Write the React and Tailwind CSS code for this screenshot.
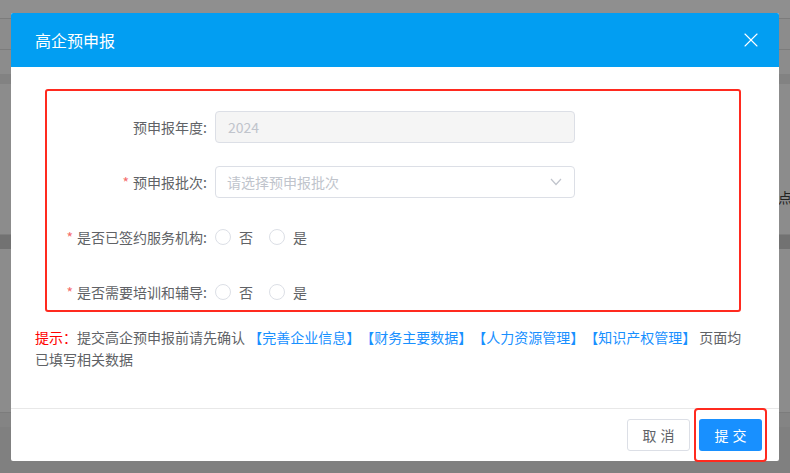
import { X } from 'lucide-react';

const Label = ({ required, children }) => (
  <div className="w-[160px] shrink-0 text-right text-[14px] text-[#606266]">
    {required && <span className="mr-[4px] text-[#f56c6c]">*</span>}
    {children}:
  </div>
);

const Radio = ({ label }) => (
  <label className="flex items-center mr-[16px]">
    <span className="h-[16px] w-[16px] rounded-full border border-[#dcdfe6] bg-white" />
    <span className="ml-[8px] text-[14px] text-[#606266]">{label}</span>
  </label>
);

const Link = ({ children }) => <span className="text-[#1890ff]">【{children}】</span>;

export default function App() {
  return (
    <div
      className="relative h-[473px] w-[790px] overflow-hidden bg-[#8c8c8c]"
      style={{ fontFamily: '"Noto Sans CJK SC", "Noto Sans", sans-serif' }}
    >
      {/* page behind the overlay */}
      <div className="flex flex-col">
        <div className="h-[19px] border-b border-[#7c7c7c] bg-[#8f8f8f]" />
        <div className="h-[31px] border-b border-[#7c7c7c]" />
        <div className="h-[24px]" />
        <div className="h-[10px] bg-[#828282]" />
        <div className="h-[105px]" />
        <div className="h-[16px] text-[14px] leading-[16px] text-[#222]">
          <span className="ml-[778px] whitespace-nowrap">点击</span>
        </div>
        <div className="h-[30px] border-b border-[#7e7e7e]" />
        <div className="h-[14px] bg-[#727272]" />
        <div className="h-[164px] border-b border-[#7c7c7c]" />
        <div className="h-[14px] bg-[#848484]" />
        <div className="h-[50px] bg-[#808080]" />
      </div>

      <div className="absolute left-[11px] top-[13px] flex h-[448px] w-[768px] flex-col rounded-[2px] bg-white">
        <div className="flex h-[54px] items-center justify-between rounded-t-[2px] bg-[#029ef2] pl-[24px] pr-[16px] text-white">
          <span className="text-[16px]">高企预申报</span>
          <X size={24} strokeWidth={1.1} />
        </div>

        <div className="flex-1 px-[24px] pt-[22px]">
          <div className="ml-[10px] h-[223px] w-[696px] rounded-[3px] border-2 border-[#ff2a1f] pt-[20px]">
            <div className="mb-[23px] flex h-[32px] items-center">
              <Label>预申报年度</Label>
              <div className="ml-[8px] flex h-[32px] w-[360px] items-center rounded-[4px] border border-[#dcdfe6] bg-[#f5f5f5] px-[12px] text-[14px] text-[#c0c4cc]">
                2024
              </div>
            </div>
            <div className="mb-[23px] flex h-[32px] items-center">
              <Label required>预申报批次</Label>
              <div className="ml-[8px] flex h-[32px] w-[360px] items-center justify-between rounded-[4px] border border-[#dcdfe6] bg-white pl-[11px] pr-[12px] text-[14px] text-[#c0c4cc]">
                <span>请选择预申报批次</span>
                <svg width="12" height="8" viewBox="0 0 12 8" fill="none">
                  <polyline points="1,1 6,6.5 11,1" stroke="#c0c4cc" strokeWidth="1.2" />
                </svg>
              </div>
            </div>
            <div className="mb-[23px] flex h-[32px] items-center">
              <Label required>是否已签约服务机构</Label>
              <div className="ml-[8px] flex items-center">
                <Radio label="否" />
                <Radio label="是" />
              </div>
            </div>
            <div className="flex h-[32px] items-center">
              <Label required>是否需要培训和辅导</Label>
              <div className="ml-[8px] flex items-center">
                <Radio label="否" />
                <Radio label="是" />
              </div>
            </div>
          </div>

          <p className="mt-[14px] text-[14px] leading-[22px] text-[#606266] [text-spacing-trim:space-all]">
            <span className="text-[#ff0000]">提示：</span>
            提交高企预申报前请先确认 <Link>完善企业信息</Link>
            <Link>财务主要数据</Link>
            <Link>人力资源管理</Link>
            <Link>知识产权管理</Link> 页面均已填写相关数据
          </p>
        </div>

        <div className="flex h-[53px] items-center justify-end border-t border-[#e8e8e8] pr-[12px]">
          <button className="h-[32px] w-[63px] rounded-[3px] border border-[#dcdfe6] bg-white pl-[4px] text-[14px] tracking-[4px] text-[#606266]">
            取消
          </button>
          <div className="ml-[4px] rounded-[4px] border-2 border-[#ff2a1f] px-[3px] py-[9px]">
            <button className="h-[32px] w-[63px] rounded-[3px] bg-[#1890ff] pl-[4px] text-[14px] tracking-[4px] text-white">
              提交
            </button>
          </div>
        </div>
      </div>
    </div>
  );
}
